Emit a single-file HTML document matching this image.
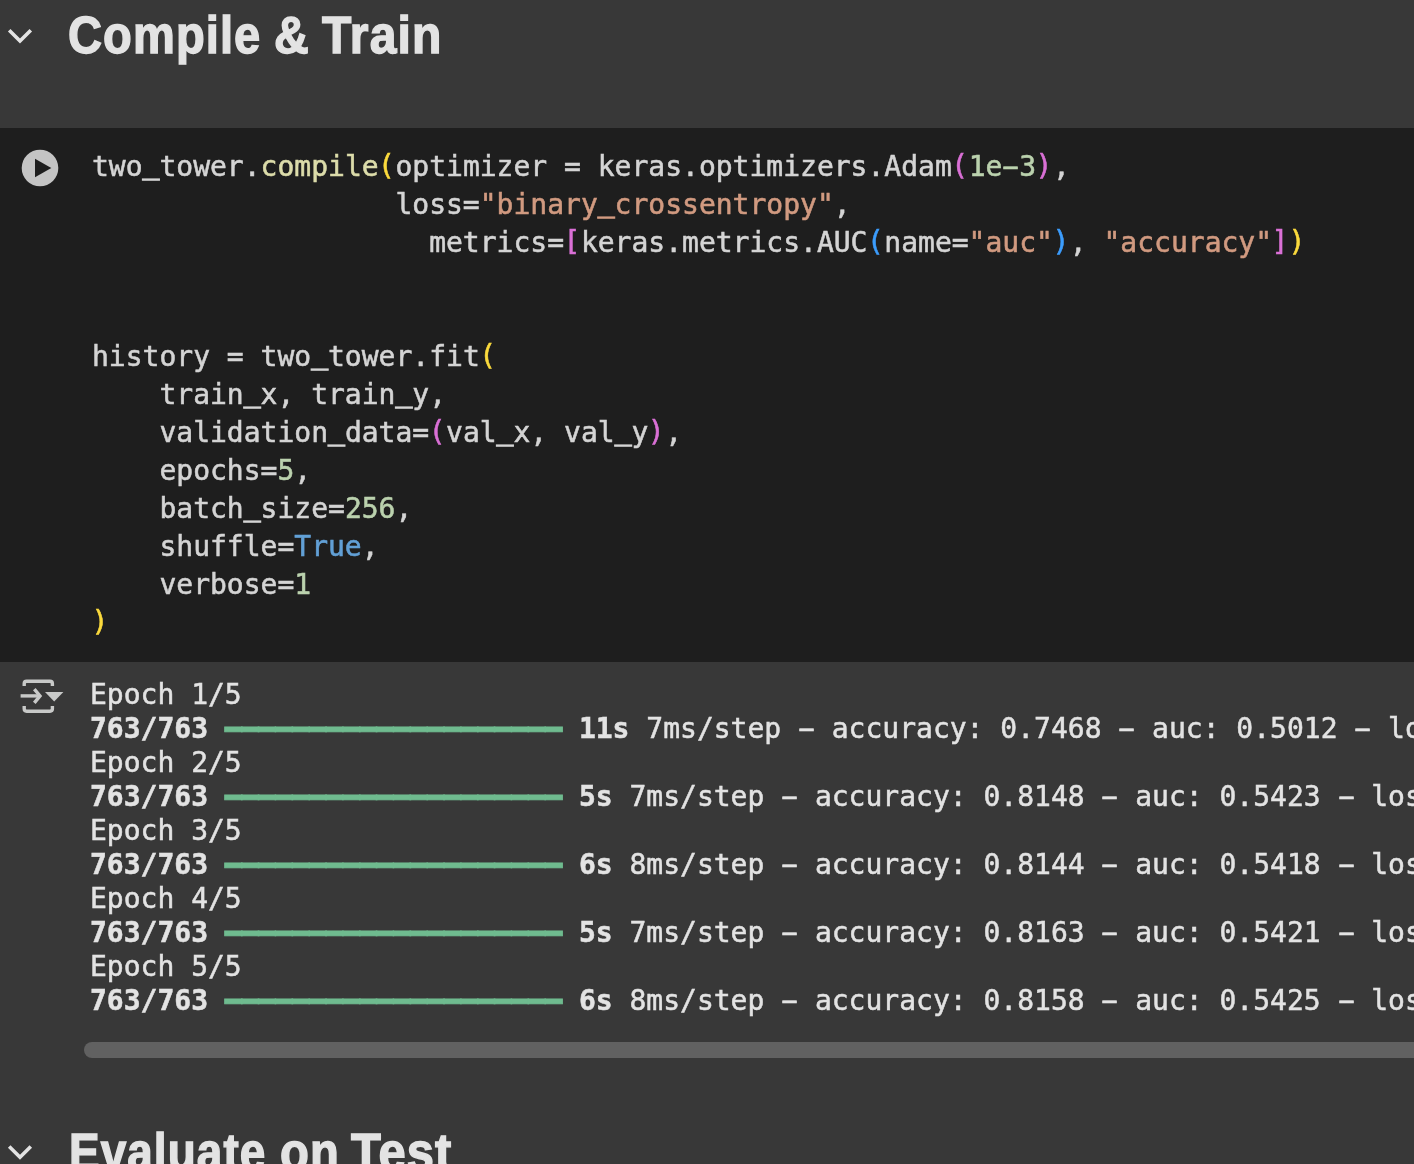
<!DOCTYPE html>
<html><head><meta charset="utf-8">
<style>
html,body{margin:0;padding:0;}
body{width:1414px;height:1164px;overflow:hidden;background:#383838;position:relative;font-family:"Liberation Sans",sans-serif;}
.h{position:absolute;left:0;margin:0;width:600px;height:60px;font-family:"Liberation Sans",sans-serif;font-weight:bold;font-size:51px;line-height:60px;color:#e3e3e3;white-space:nowrap;-webkit-text-stroke:1.4px #e3e3e3;letter-spacing:1.2px;}
.h span{position:absolute;top:0;transform-origin:0 0;}
#h1{top:6px;}
#h2{top:1122.6px;}
.chev{position:absolute;left:0;}
#code{position:absolute;left:0;top:128px;width:1414px;height:534px;background:#1e1e1e;}
pre{margin:0;font-family:"DejaVu Sans Mono","Liberation Mono",monospace;font-size:28px;white-space:pre;-webkit-text-stroke:0.55px;will-change:transform;}
#src{position:absolute;left:92px;top:20px;line-height:38px;color:#d4d4d4;}
i{font-style:normal}.u{position:relative;top:-3px;-webkit-text-stroke:1.2px}.hy{display:inline-block;transform:scaleX(1.9)}
.y,.m,.b{position:relative;top:-1px;left:-0.5px}
.y{color:#fbda3d}.m{color:#da70d6}.b{color:#3c9dfd}.s{color:#d19a80}.n{color:#bbd2ae}.f{color:#dcdcaa}.k{color:#62a0d6}
#out{position:absolute;left:90px;top:678px;line-height:34px;color:#e3e3e3;-webkit-text-stroke:0.5px;}
#out b{font-weight:bold}
.g{color:#6fbb8f;position:relative;top:1.05px;-webkit-text-stroke:1px}
#sb{position:absolute;left:84px;top:1042px;width:1400px;height:16px;border-radius:8px;background:#616161;}
</style></head><body>
<svg class="chev" style="top:0" width="60" height="70" viewBox="0 0 60 70"><path d="M9.2 30.2 L20 41 L30.8 30.2" fill="none" stroke="#e3e3e3" stroke-width="3.6"/></svg>
<h1 class="h" id="h1"><span style="left:68.4px;transform:scaleX(.9227)">Compile </span><span style="left:274.1px;transform:scaleX(.943)">&amp; </span><span style="left:321.7px;transform:scaleX(.942)">Train</span></h1>
<div id="code">
<svg style="position:absolute;left:20px;top:20px" width="40" height="40" viewBox="0 0 40 40"><circle cx="20" cy="20" r="18.3" fill="#c4c4c4"/><path d="M15 10.7 L15 29.2 L31.3 20 Z" fill="#1e1e1e"/></svg>
<pre id="src">two<i class="u">_</i>tower.<span class="f">compile</span><span class="y">(</span>optimizer = keras.optimizers.Adam<span class="m">(</span><span class="n">1e<i class="hy">-</i>3</span><span class="m">)</span>,
                  loss=<span class="s">"binary<i class="u">_</i>crossentropy"</span>,
                    metrics=<span class="m">[</span>keras.metrics.AUC<span class="b">(</span>name=<span class="s">"auc"</span><span class="b">)</span>, <span class="s">"accuracy"</span><span class="m">]</span><span class="y">)</span>


history = two<i class="u">_</i>tower.fit<span class="y">(</span>
    train<i class="u">_</i>x, train<i class="u">_</i>y,
    validation<i class="u">_</i>data=<span class="m">(</span>val<i class="u">_</i>x, val<i class="u">_</i>y<span class="m">)</span>,
    epochs=<span class="n">5</span>,
    batch<i class="u">_</i>size=<span class="n">256</span>,
    shuffle=<span class="k">True</span>,
    verbose=<span class="n">1</span>
<span class="y">)</span></pre>
</div>
<svg style="position:absolute;left:0;top:660px" width="80" height="70" viewBox="0 660 80 70"><g fill="none" stroke="#c8c9c8" stroke-width="3.4"><path d="M24.2 686.1 V683.7 a2.4 2.4 0 0 1 2.4 -2.4 H50 a2.4 2.4 0 0 1 2.4 2.4 V686.1"/><path d="M24.2 706 V708.8 a2.4 2.4 0 0 0 2.4 2.4 H50 a2.4 2.4 0 0 0 2.4 -2.4 V706"/><path d="M20.6 695.9 H39.5"/><path d="M34.3 689.2 L40 695.9 L34.3 702.9" stroke-linejoin="miter"/></g><path d="M45 691.9 H63.4 L54.2 701.4 Z" fill="#c8c9c8"/></svg>
<pre id="out">Epoch 1/5
<b>763/763</b> <span class="g">━━━━━━━━━━━━━━━━━━━━</span> <b>11s</b> 7ms/step <i class="hy">-</i> accuracy: 0.7468 <i class="hy">-</i> auc: 0.5012 <i class="hy">-</i> loss: 0.5
Epoch 2/5
<b>763/763</b> <span class="g">━━━━━━━━━━━━━━━━━━━━</span> <b>5s</b> 7ms/step <i class="hy">-</i> accuracy: 0.8148 <i class="hy">-</i> auc: 0.5423 <i class="hy">-</i> loss: 0.4
Epoch 3/5
<b>763/763</b> <span class="g">━━━━━━━━━━━━━━━━━━━━</span> <b>6s</b> 8ms/step <i class="hy">-</i> accuracy: 0.8144 <i class="hy">-</i> auc: 0.5418 <i class="hy">-</i> loss: 0.4
Epoch 4/5
<b>763/763</b> <span class="g">━━━━━━━━━━━━━━━━━━━━</span> <b>5s</b> 7ms/step <i class="hy">-</i> accuracy: 0.8163 <i class="hy">-</i> auc: 0.5421 <i class="hy">-</i> loss: 0.4
Epoch 5/5
<b>763/763</b> <span class="g">━━━━━━━━━━━━━━━━━━━━</span> <b>6s</b> 8ms/step <i class="hy">-</i> accuracy: 0.8158 <i class="hy">-</i> auc: 0.5425 <i class="hy">-</i> loss: 0.4</pre>
<div id="sb"></div>
<svg class="chev" style="top:1112px" width="60" height="52" viewBox="0 0 60 52"><path d="M9.2 34.4 L20 45.2 L30.8 34.4" fill="none" stroke="#e3e3e3" stroke-width="3.6"/></svg>
<h1 class="h" id="h2"><span style="left:68.8px;transform:scaleX(.8995)">Evaluate </span><span style="left:279.5px;transform:scaleX(.927)">on </span><span style="left:351.3px;transform:scaleX(.959)">Test</span></h1>
</body></html>
